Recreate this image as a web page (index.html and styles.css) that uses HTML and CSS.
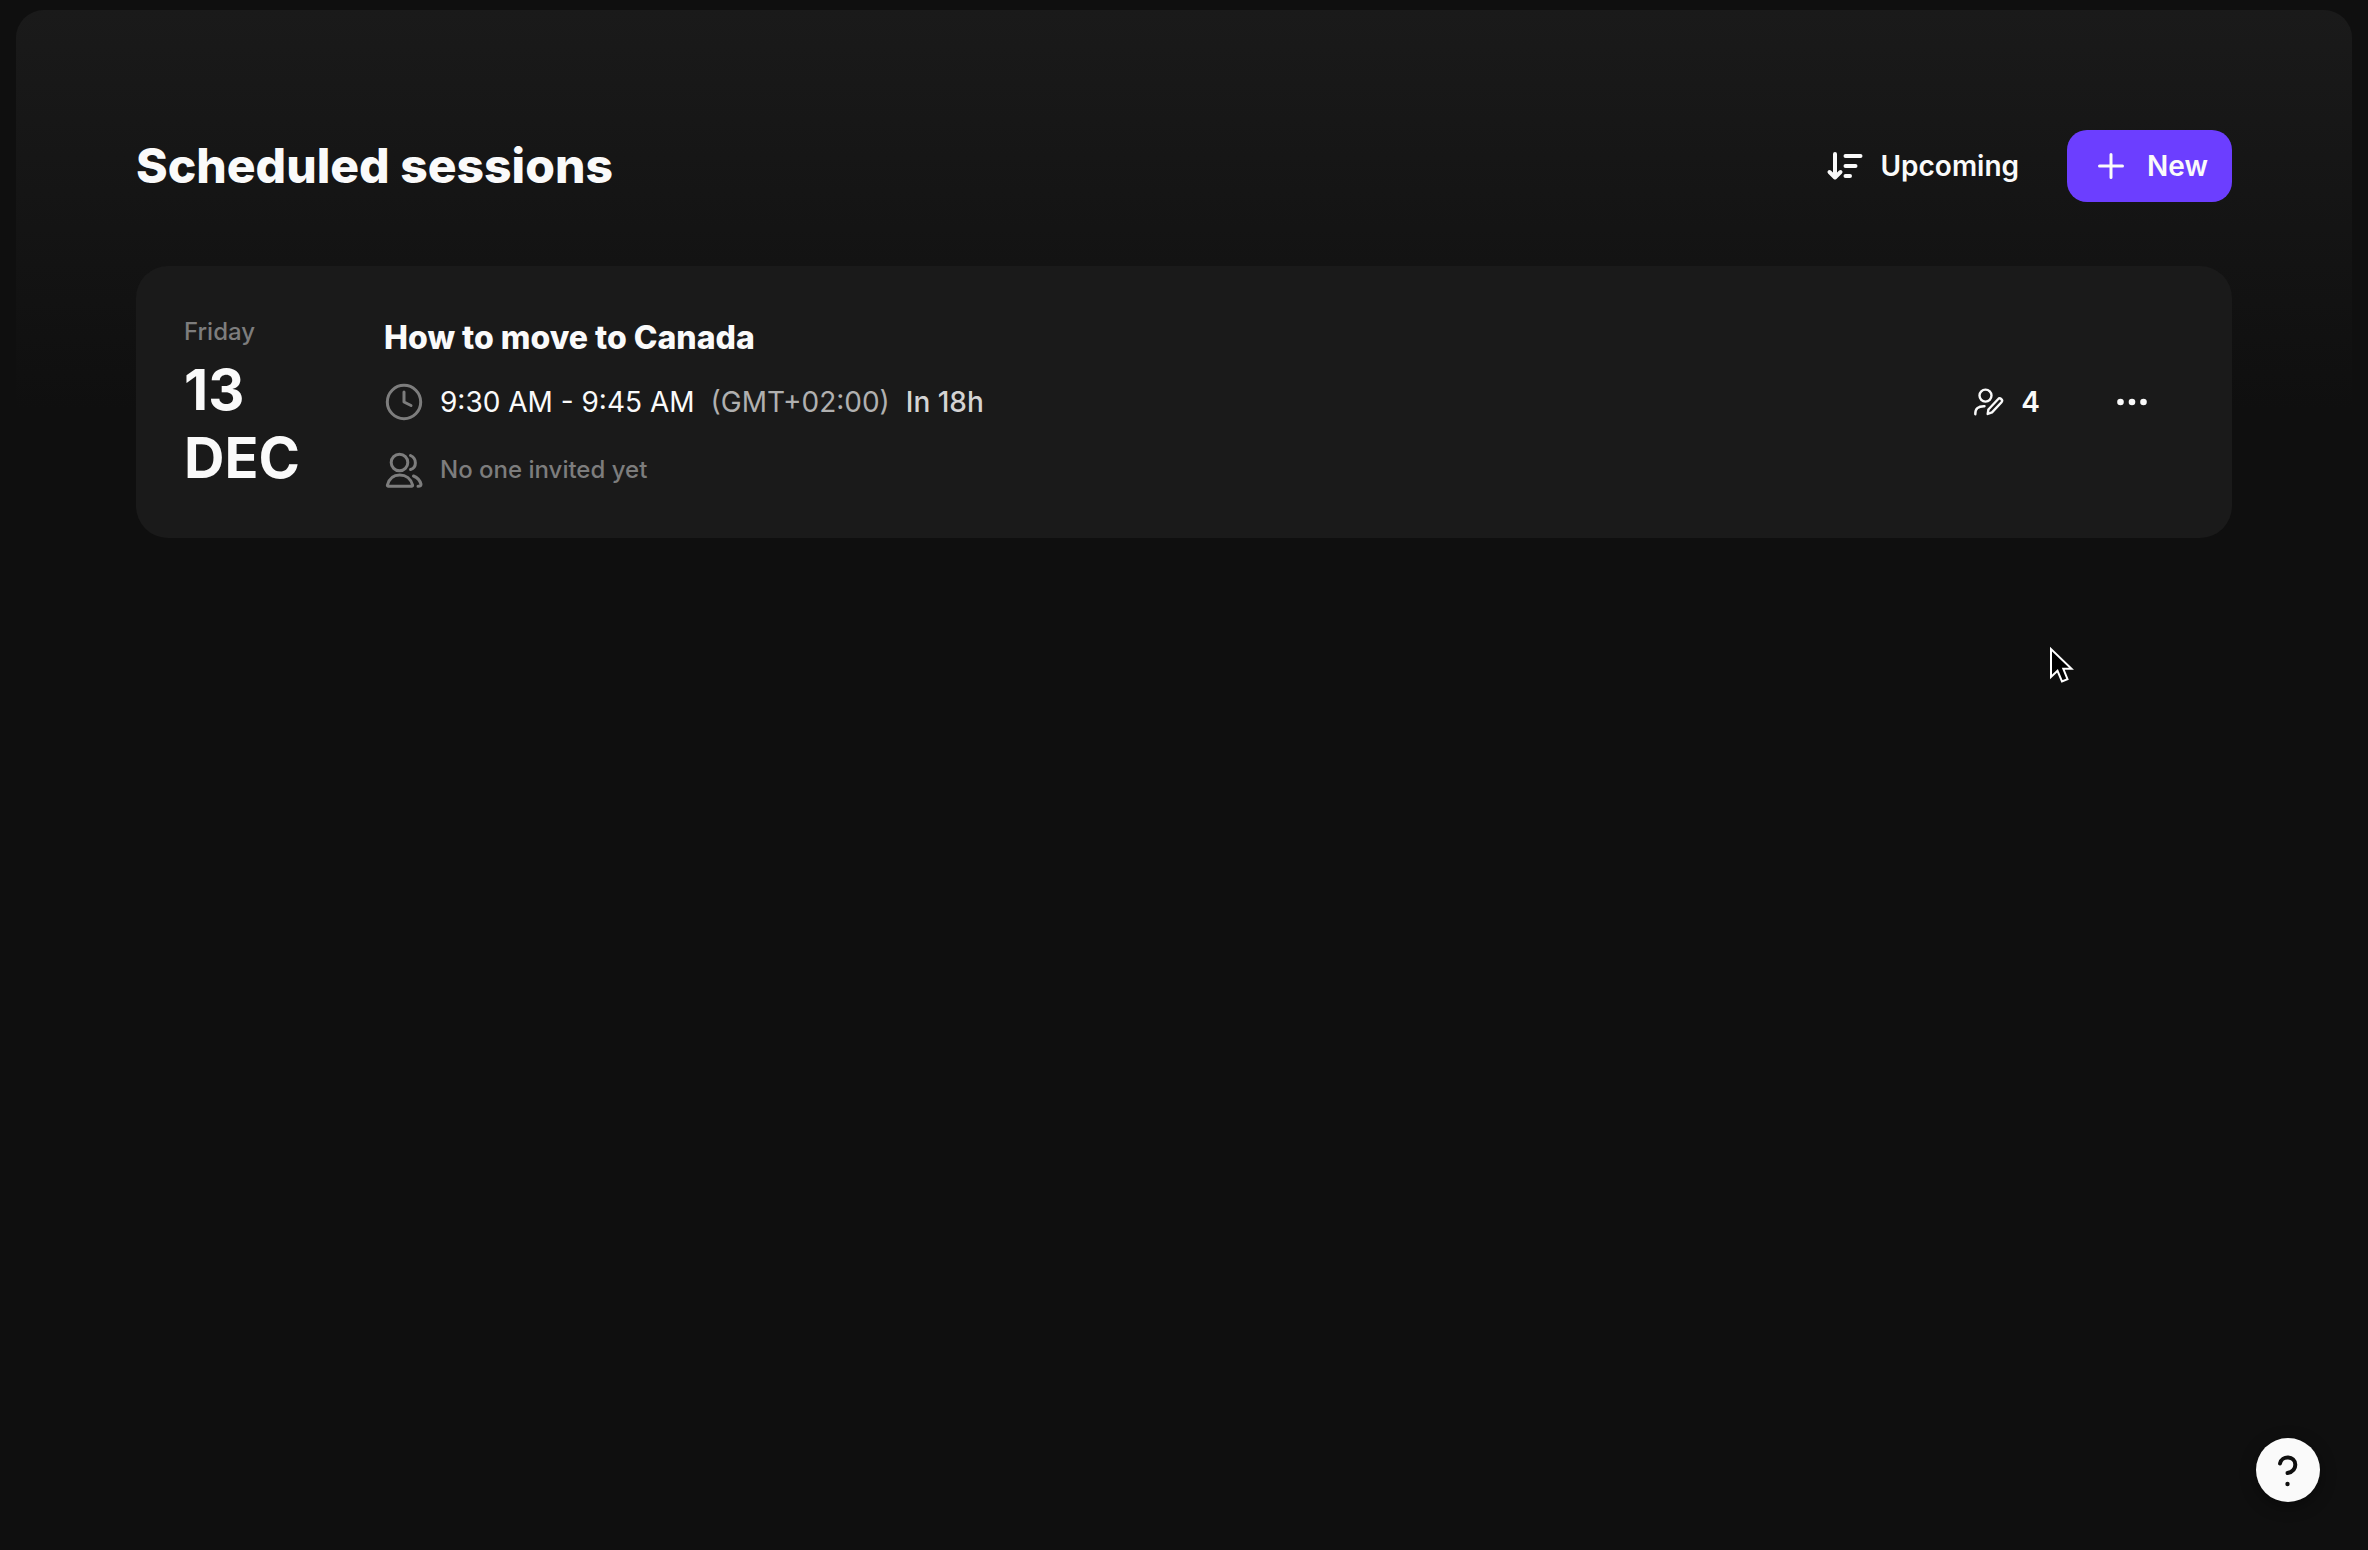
FILE: index.html
```html
<!DOCTYPE html>
<html lang="en">

<head>
    <meta charset="UTF-8">
    <meta name="viewport" content="width=device-width, initial-scale=1.0">
    <title>Scheduled sessions</title>
    <link rel="stylesheet" href="styles.css">
</head>

<body>
    <main class="panel">
        <header class="page-header">
            <h1 class="page-title">Scheduled sessions</h1>
            <div class="header-actions">
                <button class="button button-plain" type="button">
                    <svg class="icon icon-bold" viewBox="0 0 40 40" aria-hidden="true">
                        <path d="M11 8v22M5.500 26l5.500 5.500L16.500 26M21.500 10h15M21.500 20h10M21.500 30h4.500" />
                    </svg>
                    Upcoming
                </button>
                <button class="button button-primary" type="button">
                    <svg class="icon" viewBox="0 0 40 40" aria-hidden="true">
                        <path d="M20 8.500v23M8.500 20h23" />
                    </svg>
                    New
                </button>
            </div>
        </header>

        <article class="session-card">
            <div class="session-date">
                <span class="session-weekday">Friday</span>
                <span class="session-day">13</span>
                <span class="session-day">DEC</span>
            </div>
            <div class="session-info">
                <h2 class="session-title">How to move to Canada</h2>
                <div class="session-row session-time">
                    <svg class="icon icon-muted" viewBox="0 0 40 40" aria-hidden="true">
                        <circle cx="20" cy="20" r="16.700" />
                        <path d="M20 10v10l7 3.500" />
                    </svg>
                    <span class="time-range">9:30 AM - 9:45 AM</span>
                    <span class="time-zone">(GMT+02:00)</span>
                    <span class="time-left">In 18h</span>
                </div>
                <div class="session-row session-invited">
                    <svg class="icon icon-muted" viewBox="0 0 40 40" aria-hidden="true">
                        <circle cx="15.500" cy="12.500" r="8.300" />
                        <path d="M4 36.200C3.500 36.200 3.300 35.700 3.400 35.200C5 29 9.500 25 15.700 25S27 29 28.600 35.200C28.700 35.700 28.500 36.200 28 36.200Z" />
                        <path d="M26.500 5.500c6.500 3 6.500 12 0 14M29.500 26c4 1.500 6.500 4.500 7.500 8.200c0 1.500-1 2-3 2" />
                    </svg>
                    <span>No one invited yet</span>
                </div>
            </div>
            <div class="session-actions">
                <div class="editors">
                    <svg class="icon icon-small" viewBox="0 0 32 32" aria-hidden="true">
                        <circle cx="12.500" cy="9.600" r="6" />
                        <path d="M2.300 28.300C2 23 5 20 11.500 20.200" />
                        <path d="M14.700 28l.7-4.500L25 13.300a2.200 2.200 0 0 1 3.500 2.900L19 26.400Z" />
                    </svg>
                    <span>4</span>
                </div>
                <button class="button-more" type="button" aria-label="More options">
                    <svg class="icon icon-filled" viewBox="0 0 40 40" aria-hidden="true">
                        <circle cx="8.500" cy="20" r="3.300" />
                        <circle cx="20" cy="20" r="3.300" />
                        <circle cx="31.500" cy="20" r="3.300" />
                    </svg>
                </button>
            </div>
        </article>
    </main>

    <button class="button-help" type="button" aria-label="Help">
        <svg class="icon icon-bold" viewBox="0 0 40 40" aria-hidden="true">
            <path d="M12 13.500C13.500 5 27.300 5.500 27.300 14.700C27.300 19.500 24 22 19.500 23" />
            <circle class="dot" cx="19.500" cy="34" r="2.200" />
        </svg>
    </button>

    <svg class="cursor" viewBox="0 0 28 40" aria-hidden="true">
        <path d="M3 4v28l6.500-6.200L14 36.500l5.500-2.300-4.200-10.400H23.500Z" />
    </svg>
</body>

</html>
```
FILE: styles.css
```css
* {
    box-sizing: border-box;
}

body {
    margin: 0;
    min-height: 100vh;
    padding: 10px 16px 0;
    display: flex;
    background-color: #0f0f0f;
    color: #fafafa;
    font-family: Inter, "Liberation Sans", sans-serif;
    font-optical-sizing: none;
}

h1,
h2 {
    margin: 0;
}

button {
    font-family: inherit;
    color: inherit;
    border: none;
    cursor: pointer;
}

.panel {
    flex: 1;
    padding: 120px;
    border-radius: 28px 28px 0 0;
    background: linear-gradient(#1a1a1a, #0f0f0f 400px);
}

.page-header {
    display: flex;
    justify-content: space-between;
    align-items: center;
    margin-bottom: 64px;
}

.page-title {
    font-size: 48px;
    line-height: 64px;
    font-weight: 800;
}

.header-actions {
    display: flex;
    gap: 24px;
}

.button {
    height: 72px;
    display: flex;
    align-items: center;
    gap: 16px;
    padding: 0 24px;
    border-radius: 20px;
    font-size: 28px;
    font-weight: 600;
}

.button-plain {
    background: none;
}

.button-primary {
    background-color: #6c3eff;
}

.icon {
    width: 40px;
    height: 40px;
    flex: none;
    fill: none;
    stroke: currentColor;
    stroke-width: 3;
    stroke-linecap: round;
    stroke-linejoin: round;
}

.icon-bold {
    stroke-width: 4;
}

.icon-muted {
    color: #7d7d7d;
}

.icon-small {
    width: 32px;
    height: 32px;
    stroke-width: 2.4;
}

.icon-filled {
    fill: currentColor;
    stroke: none;
}

.session-card {
    display: flex;
    align-items: center;
    padding: 46px 48px;
    border-radius: 32px;
    background-color: #1a1a1a;
}

.session-date {
    width: 200px;
    display: flex;
    flex-direction: column;
}

.session-weekday {
    margin-bottom: 4px;
    font-size: 24px;
    line-height: 40px;
    font-weight: 500;
    color: #7d7d7d;
}

.session-day {
    font-size: 56px;
    line-height: 68px;
    font-weight: 700;
}

.session-info {
    flex: 1;
}

.session-title {
    margin-bottom: 20px;
    font-size: 32px;
    line-height: 48px;
    font-weight: 800;
}

.session-row {
    display: flex;
    align-items: center;
    gap: 16px;
    line-height: 40px;
}

.session-time {
    margin-bottom: 28px;
    font-size: 28px;
}

.time-zone {
    color: #b0b0b0;
}

.time-left {
    color: #d4d4d4;
    font-weight: 500;
}

.session-invited {
    font-size: 24px;
    font-weight: 500;
    color: #7d7d7d;
}

.session-actions {
    display: flex;
    align-items: center;
    gap: 40px;
}

.editors {
    display: flex;
    align-items: center;
    gap: 16px;
    font-size: 28px;
    font-weight: 600;
}

.button-more {
    display: flex;
    padding: 32px;
    background: none;
}

.button-help {
    position: fixed;
    right: 48px;
    bottom: 48px;
    width: 64px;
    height: 64px;
    display: flex;
    align-items: center;
    justify-content: center;
    padding: 0;
    border-radius: 50%;
    background-color: #fafafa;
    color: #0f0f0f;
    box-shadow: 0 4px 16px rgba(0, 0, 0, 0.4);
}

.button-help .dot {
    fill: currentColor;
    stroke: none;
}

.cursor {
    position: absolute;
    left: 2048px;
    top: 645px;
    width: 28px;
    height: 40px;
    fill: #000;
    stroke: #fff;
    stroke-width: 2;
    pointer-events: none;
}
```
